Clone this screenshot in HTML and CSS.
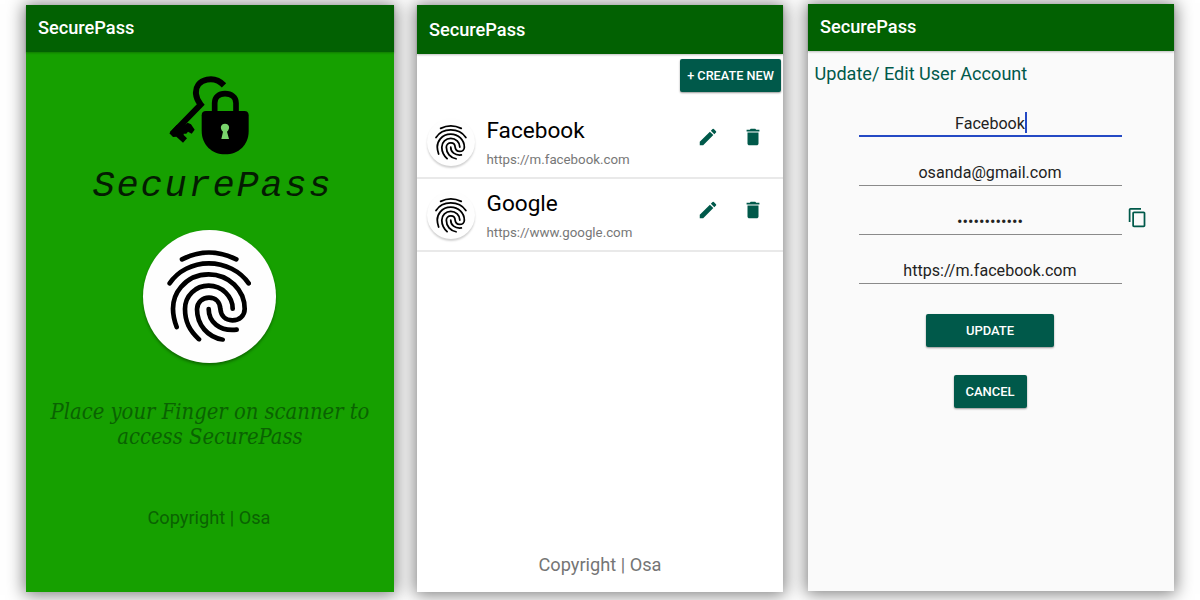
FILE: index.html
```html
<!DOCTYPE html>
<html lang="en">
<head>
<meta charset="utf-8">
<title>SecurePass</title>
<link rel="stylesheet" href="styles.css">
</head>
<body>
<svg class="symbols" aria-hidden="true">
  <symbol id="fingerprint" viewBox="98 82 254 278">
    <g fill="none" stroke="currentColor" stroke-width="14" stroke-linecap="round">
      <path d="M143 113 Q223 72 306 113"/>
      <path d="M106 185 C130 148 175 125 223 125 C272 125 318 148 343 185"/>
      <path d="M127 316 C108 265 115 225 140 196 C160 172 190 158 223 158 C283 158 331 205 331 262 C331 282 315 296 294 296 C273 296 260 282 258 262 C257 240 243 228 224 228 C204 228 188 242 188 263 C188 310 220 346 265 354"/>
      <path d="M194 353 C165 325 152 300 152 262 C152 222 184 192 223 192 C263 192 295 225 295 261"/>
      <path d="M223 262 C223 300 255 330 307 324"/>
    </g>
  </symbol>
  <symbol id="edit" viewBox="0 0 24 24"><path fill="currentColor" d="M3 17.250V21h3.750L17.810 9.940l-3.750-3.750L3 17.250zM20.710 7.040a1 1 0 0 0 0-1.410l-2.340-2.340a1 1 0 0 0-1.410 0l-1.830 1.830 3.750 3.750 1.830-1.830z"/></symbol>
  <symbol id="delete" viewBox="0 0 24 24"><path fill="currentColor" d="M6 19c0 1.100.9 2 2 2h8c1.100 0 2-.9 2-2V7H6v12zM19 4h-3.500l-1-1h-5l-1 1H5v2h14V4z"/></symbol>
</svg>
<main class="screens">
  <section class="phone phone-lock">
    <header class="bar">SecurePass</header>
    <div class="lock-body">
      <svg class="logo" viewBox="260 30 260 246">
        <path fill="none" stroke="#000" stroke-width="18" d="M434 61 C417 43 398 41 383 44 C360 49 348 66 350 87 C351 99 356 109 364 119 L278 207"/>
        <path d="M270 205 L292 180 L318 178 L325 173 L335 178 L346 194 L337 206 L326 200 L321 206 L313 206 L313 210 L323 220 L311 233 L291 215 L281 216 Z"/>
        <path fill="none" stroke="#000" stroke-width="17" d="M406 145 V114 C406 96 419 86 437 86 C456 86 470 96 470 114 V145"/>
        <path d="M380 138 H495 Q508 138 508 151 V198 C508 240 478 268 437 268 C398 268 367 240 367 198 V151 Q367 138 380 138Z"/>
        <path fill="#79d36c" d="M437 176 C424 176 420 190 431 200 L426 222 H449 L443 200 C454 190 450 176 437 176Z"/>
      </svg>
      <h1 class="wordmark">SecurePass</h1>
      <div class="scanner"><svg><use href="#fingerprint"/></svg></div>
      <p class="prompt">Place your Finger on scanner to<br>access SecurePass</p>
      <p class="copyright">Copyright | Osa</p>
    </div>
  </section>

  <section class="phone phone-list">
    <header class="bar">SecurePass</header>
    <div class="toolbar"><button class="button create">+ CREATE NEW</button></div>
    <ul class="accounts">
      <li class="account">
        <span class="badge"><svg><use href="#fingerprint"/></svg></span>
        <div class="info"><h2>Facebook</h2><p>https://m.facebook.com</p></div>
        <svg class="action"><use href="#edit"/></svg>
        <svg class="action"><use href="#delete"/></svg>
      </li>
      <li class="account">
        <span class="badge"><svg><use href="#fingerprint"/></svg></span>
        <div class="info"><h2>Google</h2><p>https://www.google.com</p></div>
        <svg class="action"><use href="#edit"/></svg>
        <svg class="action"><use href="#delete"/></svg>
      </li>
    </ul>
    <p class="copyright">Copyright | Osa</p>
  </section>

  <section class="phone phone-edit">
    <header class="bar">SecurePass</header>
    <h2 class="title">Update/ Edit User Account</h2>
    <div class="form">
      <div class="field focused"><span>Facebook</span><i class="caret"></i></div>
      <div class="field">osanda@gmail.com</div>
      <div class="field password"><span>••••••••••••</span>
        <svg class="copy" viewBox="0 0 24 24"><path fill="currentColor" d="M16 1H4c-1.100 0-2 .9-2 2v14h2V3h12V1zm3 4H8c-1.100 0-2 .9-2 2v14c0 1.100.9 2 2 2h11c1.100 0 2-.9 2-2V7c0-1.100-.9-2-2-2zm0 16H8V7h11v14z"/></svg>
      </div>
      <div class="field">https://m.facebook.com</div>
      <button class="button update">UPDATE</button>
      <button class="button cancel">CANCEL</button>
    </div>
  </section>
</main>
</body>
</html>
```
FILE: styles.css
```css
* { box-sizing: border-box; margin: 0; padding: 0; }
body {
  width: 1200px;
  height: 600px;
  overflow: hidden;
  background: #fff;
  font-family: Roboto, "Liberation Sans", sans-serif;
}
.symbols { position: absolute; width: 0; height: 0; }
.screens { display: flex; height: 600px; padding: 5px 26px 0; }
.phone {
  display: flex;
  flex-direction: column;
  width: 366px;
  height: 587px;
  background: #fff;
  box-shadow: 0 1px 16px 2px rgba(0, 0, 0, .5);
}
.phone-lock { width: 368px; background: #16a000; }
.phone-list { margin-left: 23px; }
.phone-edit { margin: -1px 0 0 25px; background: #fafafa; }
.bar {
  flex: none;
  height: 47px;
  padding-left: 12px;
  background: #026102;
  color: #fff;
  font-size: 18.2px;
  font-weight: 500;
  line-height: 46px;
  box-shadow: 0 1px 2px rgba(0, 0, 0, .25);
}
.phone-list .bar { height: 48.5px; line-height: 49px; }

.lock-body { display: flex; flex-direction: column; align-items: center; padding: 23px 2px 0 0; }
.logo { width: 86.7px; height: 82px; }
.wordmark {
  margin-top: 6px;
  padding: 2px 0 0 7px;
  height: 42px;
  font: italic 400 37px/42px "Liberation Mono", monospace;
  letter-spacing: 1.8px;
  white-space: nowrap;
  color: #041c02;
}
.scanner {
  display: flex;
  width: 133px;
  height: 133px;
  margin-top: 25px;
  padding: 19px 0 0 24px;
  border-radius: 50%;
  background: #fefefe;
  color: #000;
  box-shadow: 0 2px 3px rgba(0, 0, 0, .35);
}
.scanner svg { width: 84.7px; height: 92.7px; }
.prompt {
  margin-top: 36px;
  padding-left: 2px;
  font: italic 400 21.8px/25px "DejaVu Serif Condensed", "DejaVu Serif", serif;
  font-stretch: condensed;
  color: #0a6202;
  text-align: center;
  white-space: nowrap;
}
.copyright { color: #757575; font-size: 18.2px; line-height: 22px; text-align: center; }
.lock-body .copyright { margin-top: 58px; color: #0a6202; }

.button {
  border: 0;
  border-radius: 2px;
  background: #00594a;
  color: #fff;
  font: 500 13px/33px Roboto, sans-serif;
  height: 33px;
  box-shadow: 0 1px 2px rgba(0, 0, 0, .4);
}
.toolbar { display: flex; justify-content: flex-end; height: 52.5px; padding: 5px 2px 0 0; }
.create { width: 101px; font-size: 12.7px; white-space: nowrap; }
.accounts { list-style: none; }
.account {
  display: flex;
  height: 73px;
  padding-left: 10px;
  border-bottom: 2px solid #e9e9e9;
}
.badge {
  width: 48px;
  height: 48px;
  margin-top: 12px;
  padding: 6px 0 0 8px;
  border-radius: 50%;
  background: #fefefe;
  box-shadow: 0 2px 2px rgba(0, 0, 0, .18);
}
.badge svg { display: block; width: 32px; height: 36px; }
.info { width: 208px; margin: 11px 0 0 11.5px; }
.info h2 { font-size: 22.6px; font-weight: 400; line-height: 28px; color: #000; }
.info p { margin-top: 7px; font-size: 13.3px; line-height: 16px; color: #777; }
.action { width: 22px; height: 22px; margin: 20px 0 0 2px; color: #00594a; }
.action + .action { margin-left: 23px; }
.phone-list > .copyright { margin: auto 0 16px; }

.title { margin: 12px 0 0 6.5px; font-size: 18.1px; font-weight: 400; line-height: 22px; color: #00594a; }
.form { display: flex; flex-direction: column; align-items: center; padding: 27px 2px 0 0; }
.field {
  position: relative;
  display: flex;
  justify-content: center;
  width: 263px;
  height: 25px;
  margin-bottom: 24.1px;
  border-bottom: 1px solid #8a8a8a;
  color: #222;
  font-size: 16.1px;
  line-height: 23px;
}
.focused { border-bottom: 2px solid #2449c4; }
.caret { width: 2px; height: 21px; margin: 0 -2px 0 0; background: #2449c4; }
.password { font-size: 16.3px; }
.copy { position: absolute; left: 268px; top: -3px; width: 21px; height: 21px; color: #00594a; }
.update { width: 128px; margin-top: 5.5px; }
.cancel { width: 73px; margin-top: 28px; }
```
